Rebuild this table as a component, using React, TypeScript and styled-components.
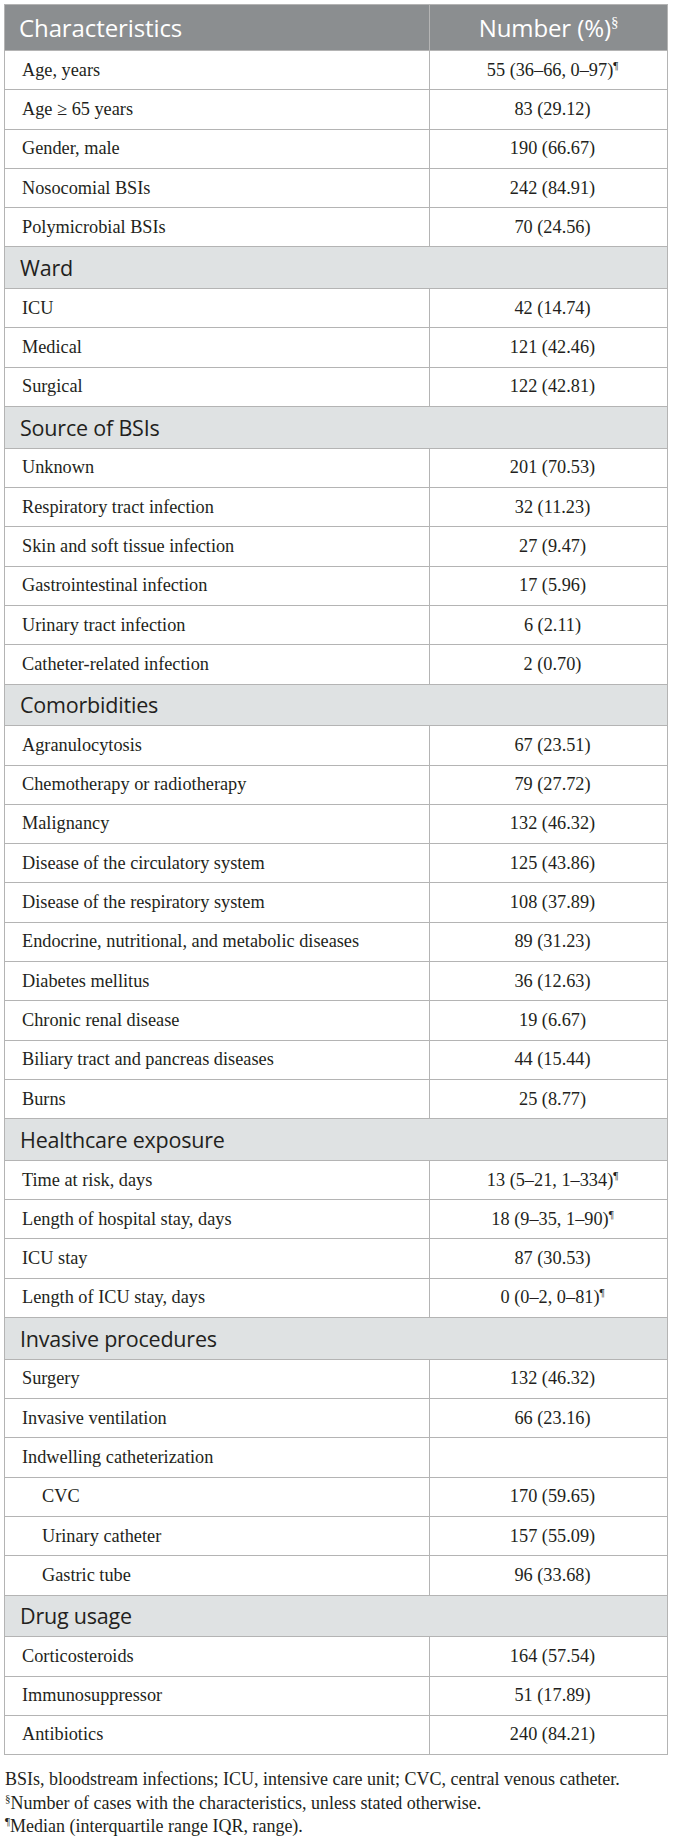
import React from "react";
import styled, { createGlobalStyle } from "styled-components";

const GlobalStyle = createGlobalStyle`
  html, body { margin: 0; padding: 0; background: #ffffff; }
  body { font-family: "Liberation Serif", "Times New Roman", serif; color: #231f20; }
`;

const Page = styled.div`
  padding: 4px 6px 8px 4px;
  width: 663px;
`;

const Table = styled.table`
  width: 663px;
  border-collapse: collapse;
  table-layout: fixed;
  border: 1px solid #b4b4b4;
`;

const HeadRow = styled.tr`
  height: 46px;
  background: #8b8e90;
`;

const HeadCell = styled.th<{ $center?: boolean }>`
  padding: 0 0 0 ${(p) => (p.$center ? "0" : "14px")};
  text-align: ${(p) => (p.$center ? "center" : "left")};
  font-family: "Open Sans", "Noto Sans", sans-serif;
  font-weight: 400;
  font-size: 24px;
  letter-spacing: -0.1px;
  color: #ffffff;
  border-left: 1px solid #b4b4b4;
  &:first-child { border-left: none; }
`;

const SectionRow = styled.tr`
  height: 41.7px;
  background: #dfe2e3;
`;

const SectionCell = styled.td`
  padding: 0 0 0 15px;
  font-family: "Open Sans", "Noto Sans", sans-serif;
  font-size: 21.5px;
  letter-spacing: -0.2px;
  color: #231f20;
  border-top: 1px solid #b4b4b4;
`;

const Row = styled.tr`
  height: 39.3px;
`;

const LabelCell = styled.td<{ $indent?: boolean }>`
  padding: 0 0 0 ${(p) => (p.$indent ? "37px" : "17px")};
  font-size: 18.3px;
  color: #231f20;
  border-top: 1px solid #b4b4b4;
  white-space: nowrap;
`;

const ValueCell = styled.td`
  padding: 0 0 0 8px;
  text-align: center;
  font-size: 18.3px;
  color: #231f20;
  border-top: 1px solid #b4b4b4;
  border-left: 1px solid #b4b4b4;
  white-space: nowrap;
`;

const Sup = styled.sup`
  font-family: "Liberation Serif", serif;
  font-size: 11px;
  line-height: 0;
  vertical-align: 7px;
`;

const HeadSup = styled.sup`
  font-family: "Liberation Serif", serif;
  font-size: 15px;
  line-height: 0;
  vertical-align: 10px;
`;

const Notes = styled.div`
  margin-top: 13px;
  padding-left: 1px;
  font-size: 18px;
  line-height: 23.4px;
  color: #231f20;
`;

const Note = styled.p`
  margin: 0;
  white-space: nowrap;
`;

type Item =
  | { kind: "section"; title: string }
  | { kind: "row"; label: string; value: string; median?: boolean; indent?: boolean };

const sec = (title: string): Item => ({ kind: "section", title });
const row = (label: string, value: string, median = false, indent = false): Item => ({
  kind: "row",
  label,
  value,
  median,
  indent,
});

const items: Item[] = [
  row("Age, years", "55 (36–66, 0–97)", true),
  row("Age ≥ 65 years", "83 (29.12)"),
  row("Gender, male", "190 (66.67)"),
  row("Nosocomial BSIs", "242 (84.91)"),
  row("Polymicrobial BSIs", "70 (24.56)"),
  sec("Ward"),
  row("ICU", "42 (14.74)"),
  row("Medical", "121 (42.46)"),
  row("Surgical", "122 (42.81)"),
  sec("Source of BSIs"),
  row("Unknown", "201 (70.53)"),
  row("Respiratory tract infection", "32 (11.23)"),
  row("Skin and soft tissue infection", "27 (9.47)"),
  row("Gastrointestinal infection", "17 (5.96)"),
  row("Urinary tract infection", "6 (2.11)"),
  row("Catheter-related infection", "2 (0.70)"),
  sec("Comorbidities"),
  row("Agranulocytosis", "67 (23.51)"),
  row("Chemotherapy or radiotherapy", "79 (27.72)"),
  row("Malignancy", "132 (46.32)"),
  row("Disease of the circulatory system", "125 (43.86)"),
  row("Disease of the respiratory system", "108 (37.89)"),
  row("Endocrine, nutritional, and metabolic diseases", "89 (31.23)"),
  row("Diabetes mellitus", "36 (12.63)"),
  row("Chronic renal disease", "19 (6.67)"),
  row("Biliary tract and pancreas diseases", "44 (15.44)"),
  row("Burns", "25 (8.77)"),
  sec("Healthcare exposure"),
  row("Time at risk, days", "13 (5–21, 1–334)", true),
  row("Length of hospital stay, days", "18 (9–35, 1–90)", true),
  row("ICU stay", "87 (30.53)"),
  row("Length of ICU stay, days", "0 (0–2, 0–81)", true),
  sec("Invasive procedures"),
  row("Surgery", "132 (46.32)"),
  row("Invasive ventilation", "66 (23.16)"),
  row("Indwelling catheterization", ""),
  row("CVC", "170 (59.65)", false, true),
  row("Urinary catheter", "157 (55.09)", false, true),
  row("Gastric tube", "96 (33.68)", false, true),
  sec("Drug usage"),
  row("Corticosteroids", "164 (57.54)"),
  row("Immunosuppressor", "51 (17.89)"),
  row("Antibiotics", "240 (84.21)"),
];

export default function App() {
  return (
    <Page>
      <GlobalStyle />
      <Table>
        <colgroup>
          <col style={{ width: 425 }} />
          <col style={{ width: 238 }} />
        </colgroup>
        <thead>
          <HeadRow>
            <HeadCell>Characteristics</HeadCell>
            <HeadCell $center>
              Number (%)<HeadSup>§</HeadSup>
            </HeadCell>
          </HeadRow>
        </thead>
        <tbody>
          {items.map((it, i) =>
            it.kind === "section" ? (
              <SectionRow key={i}>
                <SectionCell colSpan={2}>{it.title}</SectionCell>
              </SectionRow>
            ) : (
              <Row key={i}>
                <LabelCell $indent={it.indent}>{it.label}</LabelCell>
                <ValueCell>
                  {it.value}
                  {it.median && <Sup>¶</Sup>}
                </ValueCell>
              </Row>
            )
          )}
        </tbody>
      </Table>
      <Notes>
        <Note>BSIs, bloodstream infections; ICU, intensive care unit; CVC, central venous catheter.</Note>
        <Note>
          <Sup>§</Sup>Number of cases with the characteristics, unless stated otherwise.
        </Note>
        <Note>
          <Sup>¶</Sup>Median (interquartile range IQR, range).
        </Note>
      </Notes>
    </Page>
  );
}
